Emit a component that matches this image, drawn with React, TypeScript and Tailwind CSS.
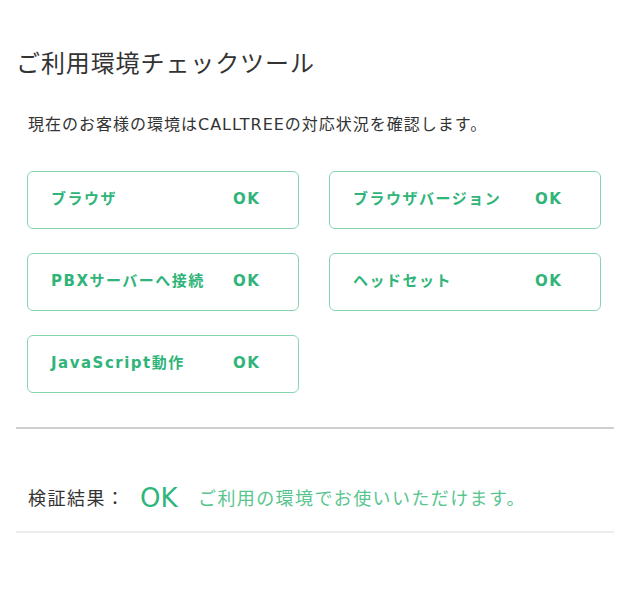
import React from "react";

const items: { label: string }[] = [
  { label: "ブラウザ" },
  { label: "ブラウザバージョン" },
  { label: "PBXサーバーへ接続" },
  { label: "ヘッドセット" },
  { label: "JavaScript動作" },
];

const font = {
  fontFamily: '"DejaVu Sans", "Noto Sans CJK JP", sans-serif',
};

export default function App() {
  return (
    <div className="w-[626px] h-[595px] bg-white pl-4 pr-3 pt-[49px]" style={font}>
      <h1 className="text-[24px] leading-[30px] tracking-[0.9px] text-[#333] font-normal">
        ご利用環境チェックツール
      </h1>
      <p className="mt-[35px] pl-3 text-[16px] leading-[22px] tracking-[1px] text-[#333]">
        現在のお客様の環境はCALLTREEの対応状況を確認します。
      </p>
      <div className="mt-[35px] px-[11px] grid grid-cols-[272px_272px] gap-x-[30px] gap-y-[24px]">
        {items.map((it) => (
          <div
            key={it.label}
            className="h-[58px] rounded-[6px] border border-[#86d6b2] flex items-center pb-[2px] pl-[23px] text-[15px] font-bold tracking-[0.1em] text-[#30b479]"
          >
            <span className="w-[182px]">{it.label}</span>
            <span>OK</span>
          </div>
        ))}
      </div>
      <div className="mt-[34px] border-t-2 border-[#cfcfcf]" />
      <div className="h-[102px] pl-3 flex items-center pt-[37px]">
        <span className="text-[18px] tracking-[1.5px] text-[#333] w-[112px]">検証結果：</span>
        <span className="text-[26px] text-[#2fb67c] w-[58px]">OK</span>
        <span className="text-[18px] tracking-[1.4px] text-[#58c58f]">ご利用の環境でお使いいただけます。</span>
      </div>
      <div className="border-t-2 border-[#ececec]" />
    </div>
  );
}
